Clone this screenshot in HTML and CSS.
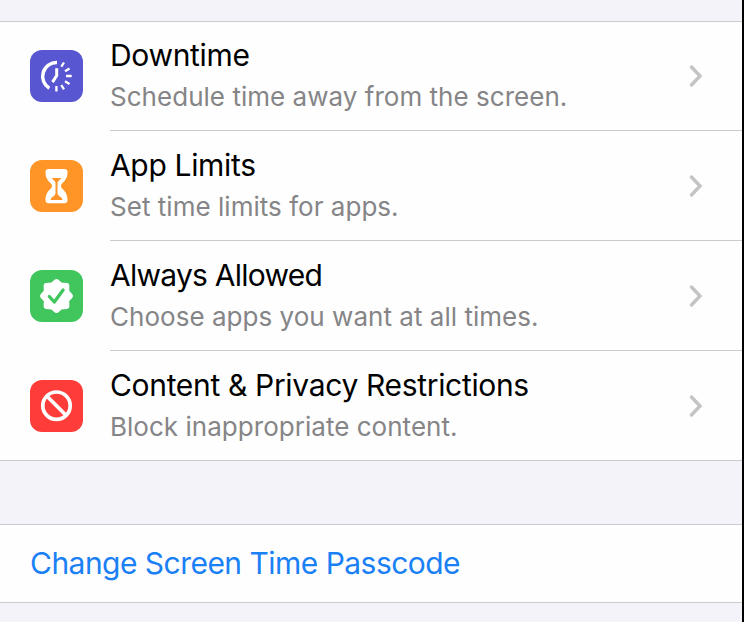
FILE: index.html
```html
<!DOCTYPE html>
<html lang="en">
<head>
    <meta charset="UTF-8">
    <meta name="viewport" content="width=device-width, initial-scale=1.0">
    <title>Screen Time</title>
    <link rel="stylesheet" href="styles.css">
</head>
<body>
    <div class="settings">
        <div class="group">
            <div class="row">
                <svg class="icon downtime" viewBox="0 0 53 52" fill="none" stroke="#fff">
                    <path d="M27 12.4A14 14 0 0 0 19.3 38.3" stroke-width="3.5"/>
                    <path d="M26.7 18.3v7.2l-4.2 6.6" stroke-width="3"/>
                    <path d="M31.3 16.7l2.7-4.2M35 21.2l4.5-2.7M36 26h5.7M35 31.2l4.5 2.7M31.3 35l2.7 4.3M26.4 36v5.5" stroke-width="2.3"/>
                </svg>
                <div class="content">
                    <div class="text">
                        <div class="title">Downtime</div>
                        <div class="subtitle">Schedule time away from the screen.</div>
                    </div>
                    <svg class="chevron" viewBox="0 0 14 24"><path d="M2.5 3l8.5 9-8.5 9"/></svg>
                </div>
            </div>
            <div class="row">
                <svg class="icon limits" viewBox="0 0 53 52">
                    <path fill="#fff" d="M18.5 9h16q3 0 3 3c0 6-2.3 8.5-5.2 11.3q-2.6 2.7 0 5.4c2.9 2.8 5.2 5.3 5.2 11.5q0 3-3 3h-16q-3 0-3-3c0-6.2 2.3-8.7 5.2-11.5q2.6-2.7 0-5.4c-2.9-2.8-5.2-5.3-5.2-11.3q0-3 3-3z"/>
                    <path fill="#ff9527" d="M21.7 18h9.6q-.8 1.5-2.3 2.4-1.5 1-1.5 3v9.8q0 2 2 3 2.7 1.3 3 3.800h-12q.3-2.500 3-3.800 2-1 2-3v-9.800q0-2-1.500-3-1.500-.9-2.300-2.400z"/>
                </svg>
                <div class="content">
                    <div class="text">
                        <div class="title">App Limits</div>
                        <div class="subtitle">Set time limits for apps.</div>
                    </div>
                    <svg class="chevron" viewBox="0 0 14 24"><path d="M2.5 3l8.5 9-8.5 9"/></svg>
                </div>
            </div>
            <div class="row">
                <svg class="icon allowed" viewBox="0 0 53 52">
                    <path fill="#fff" stroke="#fff" stroke-width="5" stroke-linejoin="round" d="M26.5 11.500l4.200 3.500 6.200.6-.2 6.200 3.800 4.200-3.800 4.200.2 6.200-6.200.6-4.200 3.500-4.200-3.500-6.200-.6.2-6.200-3.800-4.200 3.800-4.200-.2-6.200 6.200-.6z"/>
                    <path d="M19.3 26.500l5 5.500 8.800-12" fill="none" stroke="#41c55d" stroke-width="3.3" stroke-linecap="round" stroke-linejoin="round"/>
                </svg>
                <div class="content">
                    <div class="text">
                        <div class="title tight">Always Allowed</div>
                        <div class="subtitle">Choose apps you want at all times.</div>
                    </div>
                    <svg class="chevron" viewBox="0 0 14 24"><path d="M2.5 3l8.5 9-8.5 9"/></svg>
                </div>
            </div>
            <div class="row">
                <svg class="icon restrictions" viewBox="0 0 53 52" fill="none" stroke="#fff" stroke-width="3.7">
                    <circle cx="26.5" cy="25.7" r="13.7"/>
                    <path d="M17 16.2l19 19"/>
                </svg>
                <div class="content">
                    <div class="text">
                        <div class="title">Content &amp; Privacy Restrictions</div>
                        <div class="subtitle">Block inappropriate content.</div>
                    </div>
                    <svg class="chevron" viewBox="0 0 14 24"><path d="M2.5 3l8.5 9-8.5 9"/></svg>
                </div>
            </div>
        </div>

        <div class="group">
            <a class="link">Change Screen Time Passcode</a>
        </div>
    </div>
</body>
</html>
```
FILE: styles.css
```css
body {
    margin: 0;
    background-color: #f4f3f9;
    font-family: Inter, "Liberation Sans", sans-serif;
}
.settings {
    box-sizing: border-box;
    height: 622px;
    padding-top: 21px;
    border-right: 2px solid #000;
    overflow: hidden;
}
.group {
    background: #fefefe;
    border-top: 1px solid #cbcbcf;
    border-bottom: 1px solid #cbcbcf;
    margin-bottom: 63px;
}
.row {
    box-sizing: border-box;
    display: flex;
    height: 110px;
    padding: 1px 0 0 30px;
}
.row:first-child {
    height: 109px;
    padding-top: 0;
}
.row:last-child {
    height: 109px;
}
.icon {
    width: 53px;
    height: 52px;
    margin: 28px 27px 0 0;
    border-radius: 12px;
    flex-shrink: 0;
}
.downtime {
    background-color: #5856d0;
}
.limits {
    background-color: #ff9527;
}
.allowed {
    background-color: #41c55d;
}
.restrictions {
    background-color: #fe3d3b;
}
.content {
    flex: 1;
    display: flex;
    justify-content: space-between;
    border-bottom: 1px solid #cbcbcf;
}
.row:last-child .content {
    border-bottom: none;
}
.title {
    margin-top: 13px;
    font-size: 30px;
    line-height: 40px;
    letter-spacing: -0.33px;
    color: #000;
    white-space: nowrap;
}
.title.tight {
    letter-spacing: -0.75px;
}
.subtitle {
    font-size: 26px;
    line-height: 44px;
    letter-spacing: 0.03px;
    color: #858587;
    white-space: nowrap;
}
.chevron {
    width: 14px;
    height: 24px;
    margin: 42px 39px 0 0;
    fill: none;
    stroke: #c4c4c7;
    stroke-width: 3.4;
    stroke-linecap: round;
}
.link {
    display: block;
    height: 77px;
    padding-left: 30px;
    font-size: 30px;
    line-height: 77px;
    letter-spacing: -0.53px;
    color: #1a80f5;
}
```
